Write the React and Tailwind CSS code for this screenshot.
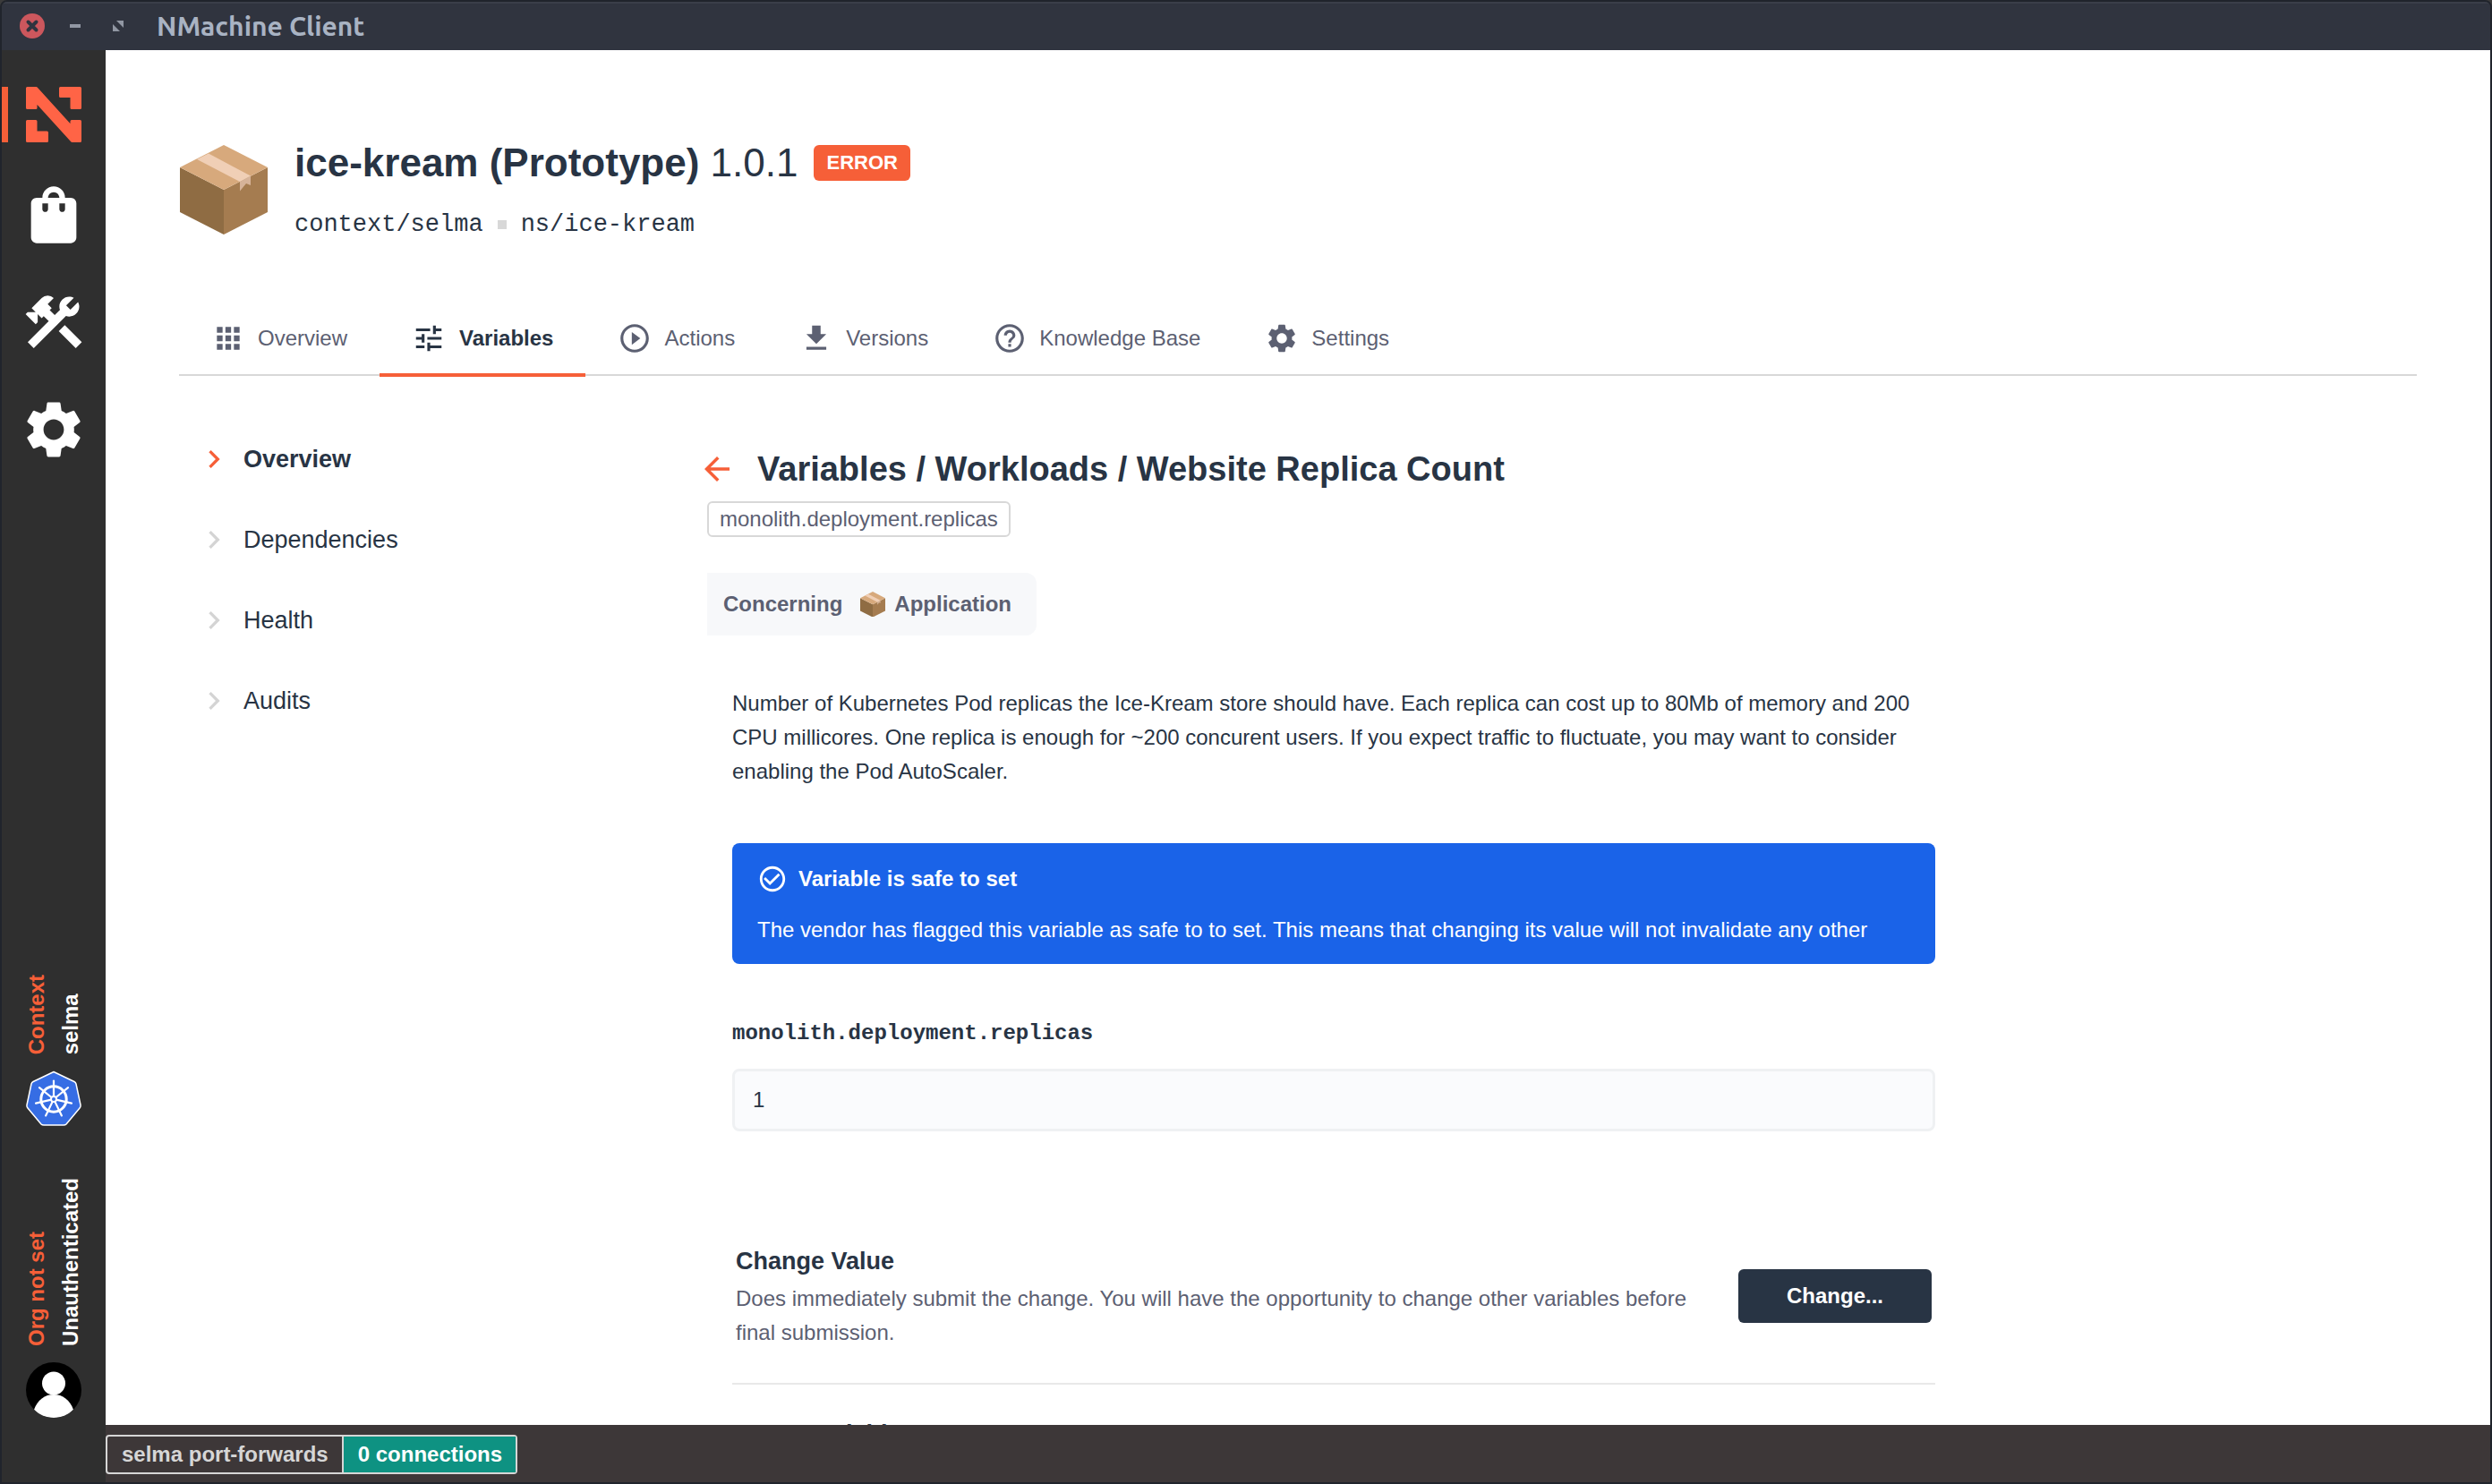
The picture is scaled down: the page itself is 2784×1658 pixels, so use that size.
import React from "react";
import {
  MdApps,
  MdTune,
  MdPlayCircleOutline,
  MdHelpOutline,
  MdSettings,
  MdShoppingBag,
  MdConstruction,
  MdChevronRight,
  MdArrowBack,
  MdCheckCircleOutline,
} from "react-icons/md";

function PackageIcon({ className }) {
  return (
    <svg viewBox="0 0 98 100" className={className} aria-hidden="true">
      <path fill="#8f6c43" d="M0 25 49 50v50L0 75z" />
      <path fill="#a57c50" d="M98 25 49 50v50l49-25z" />
      <path fill="#d7a97c" d="M49 0 98 25 49 50 0 25z" />
      <path fill="#f0cfb6" d="M19 16 32 9.500 79 34.500 67 41z" />
      <path fill="#d6b399" d="M67 41l12-6.500v10.500l-5-2-7 8.500z" />
    </svg>
  );
}

function BrandLogo() {
  return (
    <svg
      viewBox="0 0 62 62"
      className="size-[62px]"
      fill="#ff6446"
      stroke="#ff6446"
      strokeWidth="3"
      strokeLinejoin="round"
      aria-hidden="true"
    >
      <path d="M1.500 1.500H11.500L51 45V38.500H60.500V60.500H51.500L11 16V23.500H1.500Z" />
      <path d="M38.500 1.500H60.500V23.500H51V10.500H38.500Z" />
      <path d="M1.500 38.500H11V51H23.500V60.500H1.500Z" />
    </svg>
  );
}

function DownloadIcon({ className }) {
  return (
    <svg viewBox="0 0 24 24" fill="currentColor" className={className} aria-hidden="true">
      <path d="M19 9h-4V3H9v6H5l7 7 7-7zM5 18v2h14v-2H5z" />
    </svg>
  );
}

function KubernetesIcon() {
  const spokes = [0, 1, 2, 3, 4, 5, 6];
  return (
    <svg viewBox="0 0 62 62" className="size-[62px]" aria-hidden="true">
      <path
        d="M31 1.500 54 12.500Q55.500 13.300 56 15L61 38.500Q61.300 40.500 60 42L45 60Q44 61 42 61H20Q18 61 17 60L2 42Q.7 40.500 1 38.500L6 15Q6.500 13.300 8 12.500Z"
        fill="#366de4"
        stroke="#fff"
        strokeWidth="1.500"
        strokeLinejoin="round"
      />
      <g stroke="#fff" fill="none" strokeLinecap="round">
        <circle cx="31" cy="32" r="14.200" strokeWidth="3" />
        {spokes.map((i) => (
          <g key={i} transform={`rotate(${(i * 360) / 7} 31 32)`}>
            <path d="M31 28V11.500" strokeWidth="2.200" />
          </g>
        ))}
        <circle cx="31" cy="32" r="3" strokeWidth="2" fill="#366de4" />
      </g>
    </svg>
  );
}

function AvatarIcon() {
  return (
    <svg viewBox="0 0 62 62" className="size-[62px]" aria-hidden="true">
      <clipPath id="avatar-clip">
        <circle cx="31" cy="31" r="31" />
      </clipPath>
      <g clipPath="url(#avatar-clip)">
        <rect width="62" height="62" fill="#000" />
        <circle cx="31" cy="23.500" r="13" fill="#fff" />
        <path d="M9 53C13 42 21 36 31 36s18 6 22 17C47 60 40 62 31 62S15 60 9 53Z" fill="#fff" />
      </g>
    </svg>
  );
}

function TitleBar() {
  return (
    <header className="flex h-[54px] shrink-0 items-center border-t-2 border-[#3a3e49] bg-[#30343f] pb-0.5 pl-5">
      <button aria-label="Close" className="size-7">
        <svg viewBox="0 0 28 28" className="size-7">
          <circle cx="14" cy="14" r="14" fill="#cc575d" />
          <path d="M9.500 9.500l9 9M18.500 9.500l-9 9" stroke="#30343f" strokeWidth="4" strokeLinecap="round" />
        </svg>
      </button>
      <button aria-label="Minimize" className="ml-7 size-3">
        <svg viewBox="0 0 12 12" className="size-3">
          <path d="M0 4h12v4H0z" fill="#9197a3" />
        </svg>
      </button>
      <button aria-label="Restore" className="ml-9 size-3">
        <svg viewBox="0 0 12 12" className="size-3" fill="#9197a3">
          <path d="M4 0h8v8zM0 4l8 8H0z" />
        </svg>
      </button>
      <h1 className="ml-[37px] font-['Ubuntu','Noto_Sans',sans-serif] text-[30px] font-bold leading-8 text-[#a9b3c3]">
        NMachine Client
      </h1>
    </header>
  );
}

function SideText({ title, value }) {
  return (
    <div className="rotate-180 text-2xl font-bold leading-[38px] [writing-mode:vertical-rl]">
      <p className="text-[#f65f38]">{title}</p>
      <p className="text-white">{value}</p>
    </div>
  );
}

function SideBar() {
  return (
    <aside className="flex w-[116px] shrink-0 flex-col items-center bg-[#2f2f2f] pb-[72px] pt-[41px] text-white">
      <nav className="flex w-full flex-col" aria-label="Main">
        <button
          aria-label="Home"
          className="mb-[21px] flex w-full justify-center border-l-[7px] border-[#f65f38] pr-[7px]"
        >
          <BrandLogo />
        </button>
        {[
          ["Store", MdShoppingBag],
          ["Tools", MdConstruction],
          ["Settings", MdSettings],
        ].map(([label, Icon]) => (
          <button key={label} aria-label={label} className="flex h-[120px] w-full items-center justify-center">
            <Icon className="size-[76px]" />
          </button>
        ))}
      </nav>
      <div className="mt-auto flex flex-col items-center gap-[18px]">
        <SideText title="Context" value="selma" />
        <KubernetesIcon />
      </div>
      <div className="mt-[58px] flex flex-col items-center gap-[18px]">
        <SideText title="Org not set" value="Unauthenticated" />
        <AvatarIcon />
      </div>
    </aside>
  );
}

const tabs = [
  ["Overview", MdApps],
  ["Variables", MdTune],
  ["Actions", MdPlayCircleOutline],
  ["Versions", DownloadIcon],
  ["Knowledge Base", MdHelpOutline],
  ["Settings", MdSettings],
];

function Tabs() {
  return (
    <div role="tablist" className="mt-[68px] flex h-[82px] border-b-2 border-[#d8d8d8]">
      {tabs.map(([label, Icon]) => {
        const active = label === "Variables";
        return (
          <button
            key={label}
            role="tab"
            aria-selected={active}
            className={
              active
                ? "-mb-[3px] flex items-center gap-[15px] border-b-4 border-[#f65f38] px-9 text-2xl font-bold text-[#283444]"
                : "flex items-center gap-3.5 px-9 text-2xl text-[#5c6072]"
            }
          >
            <Icon className="size-[38px]" />
            {label}
          </button>
        );
      })}
    </div>
  );
}

function SectionNav() {
  return (
    <nav className="w-[590px] shrink-0 pt-12" aria-label="Sections">
      {["Overview", "Dependencies", "Health", "Audits"].map((label) => {
        const active = label === "Overview";
        return (
          <a key={label} href="#" className="flex h-[90px] items-center gap-[13px] pl-[19px]">
            <MdChevronRight className={active ? "size-10 text-[#f65f38]" : "size-10 text-[#d4d4d4]"} />
            <span className={active ? "text-[27px] font-bold" : "text-[27px]"}>{label}</span>
          </a>
        );
      })}
    </nav>
  );
}

function Operation({ title, text, action }) {
  return (
    <section className="flex items-center justify-between border-b-2 border-[#e9e9e9] px-1 pb-[37px]">
      <div className="max-w-[1080px]">
        <h3 className="text-[27px] font-bold leading-[42px]">{title}</h3>
        <p className="mt-0.5 text-2xl leading-[38px] text-[#5c6072]">{text}</p>
      </div>
      <button className="h-[60px] w-[216px] rounded-md bg-[#283444] text-2xl font-bold text-white">{action}</button>
    </section>
  );
}

function VariablePanel() {
  return (
    <section className="max-w-[1372px] flex-1 pt-[78px]">
      <div className="flex items-center gap-6">
        <a href="#" aria-label="Back" className="-ml-2.5 text-[#f65f38]">
          <MdArrowBack className="size-[42px]" />
        </a>
        <h2 className="text-[38px] font-bold leading-[52px]">Variables / Workloads / Website Replica Count</h2>
      </div>
      <p className="mt-2.5 h-10 w-fit rounded-md border-2 border-[#d8d8d8] px-3 text-2xl leading-9 text-[#5c6072]">
        monolith.deployment.replicas
      </p>
      <div className="mt-10 flex h-[70px] w-fit items-center rounded-r-xl bg-[#f7f8fa] pl-[18px] pr-7 text-2xl font-bold text-[#5c6072]">
        Concerning
        <PackageIcon className="ml-5 mr-2.5 w-7" />
        Application
      </div>
      <div className="ml-7">
        <p className="mt-[57px] text-2xl leading-[38px]">
          Number of Kubernetes Pod replicas the Ice-Kream store should have. Each replica can cost up to 80Mb of memory
          and 200 CPU millicores. One replica is enough for ~200 concurent users. If you expect traffic to fluctuate,
          you may want to consider enabling the Pod AutoScaler.
        </p>
        <div className="mt-[61px] rounded-lg bg-[#1a63e8] px-7 pb-[19px] pt-[21px] text-2xl leading-[38px] text-white">
          <div className="flex items-center gap-3">
            <MdCheckCircleOutline className="size-[34px]" />
            <strong>Variable is safe to set</strong>
          </div>
          <p className="mt-[19px]">
            The vendor has flagged this variable as safe to to set. This means that changing its value will not
            invalidate any other
          </p>
        </div>
        <label
          htmlFor="replicas"
          className="mt-[59px] block font-['Liberation_Mono',monospace] text-2xl font-bold leading-[38px]"
        >
          monolith.deployment.replicas
        </label>
        <input
          id="replicas"
          defaultValue="1"
          className="mb-[124px] mt-5 block h-[70px] w-full rounded-lg border-[3px] border-[#eff1f3] bg-[#fafbfd] px-5 text-2xl"
        />
        <Operation
          title="Change Value"
          text="Does immediately submit the change. You will have the opportunity to change other variables before final submission."
          action="Change..."
        />
        <h3 className="mt-[34px] px-1 text-[27px] font-bold leading-[42px]">Reset Variable</h3>
      </div>
    </section>
  );
}

function StatusBar() {
  return (
    <footer className="flex h-16 shrink-0 items-start bg-[#3d3738] pt-[11px]">
      <div className="flex h-11 divide-x-2 divide-[#d6d6d6] rounded-sm border-2 border-[#d6d6d6] text-2xl font-bold leading-10">
        <span className="pl-4 pr-[15px] text-[#d6d6d6]">selma port-forwards</span>
        <span className="bg-[#0e9282] pl-4 pr-[15px] text-white">0 connections</span>
      </div>
    </footer>
  );
}

export default function App() {
  return (
    <div className="h-screen bg-[#3b3b3b] font-['Liberation_Sans',Arial,sans-serif] text-[#283444]">
      <div className="flex h-full flex-col overflow-hidden rounded-t-lg border-2 border-[#20242c]">
        <TitleBar />
        <div className="flex min-h-0 flex-1">
          <SideBar />
          <div className="flex min-w-0 flex-1 flex-col">
            <main className="min-h-0 flex-1 overflow-hidden bg-white px-[82px] pt-[98px]">
              <div className="flex gap-[30px]">
                <PackageIcon className="ml-px mt-2 w-[98px] self-start" />
                <div>
                  <div className="flex items-center gap-[18px]">
                    <h2 className="text-[44px] leading-[56px]">
                      <strong>ice-kream (Prototype)</strong> 1.0.1
                    </h2>
                    <span className="h-10 rounded-md bg-[#f65f38] px-3.5 text-[22px] font-bold leading-10 text-white">
                      ERROR
                    </span>
                  </div>
                  <div className="mt-[22px] flex items-center gap-4 font-['Liberation_Mono',monospace] text-[27px] leading-[38px]">
                    context/selma
                    <span className="size-2.5 bg-[#d8d8d8]" />
                    ns/ice-kream
                  </div>
                </div>
              </div>
              <Tabs />
              <div className="flex">
                <SectionNav />
                <VariablePanel />
              </div>
            </main>
            <StatusBar />
          </div>
        </div>
      </div>
    </div>
  );
}
